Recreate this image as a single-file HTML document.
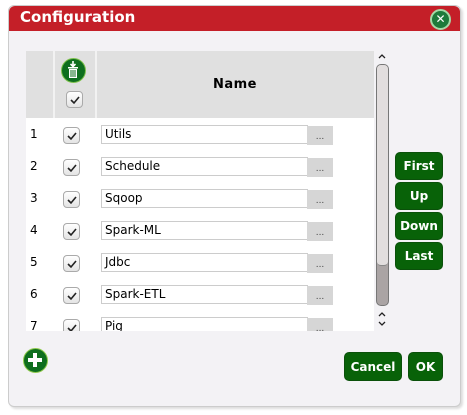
<!DOCTYPE html>
<html><head><style>
*{box-sizing:border-box;margin:0;padding:0}
body{width:467px;height:415px;background:#fff;position:relative;overflow:hidden;font-family:"DejaVu Sans","Liberation Sans",sans-serif}
.dlg{position:absolute;left:8px;top:5px;width:453px;height:402px;background:#f3f2f5;border:1px solid #ccc;border-radius:6px;box-shadow:2px 2px 2px #ddd}
.title{position:absolute;left:0;top:0;width:451px;height:25px;background:#c41f28;border-radius:6px 6px 0 0;color:#fff;font-weight:bold;font-size:15px;padding:2px 0 0 11px}
.x{position:absolute;left:421px;top:3px;width:21px;height:21px;border-radius:50%;background:#1e7a3a;border:2px solid #a6d9a6;color:#fff;font-size:12px;font-weight:bold;text-align:center;line-height:17px}
.tbl{position:absolute;left:26px;top:51px;width:348px;height:280px;background:#fff;overflow:hidden}
.hdr{position:absolute;left:0;top:0;width:348px;height:67px;background:#e0e0e0}
.sep{position:absolute;top:0;width:2px;height:67px;background:#f2f2f2}
.name{position:absolute;left:70px;top:26px;width:278px;text-align:center;font-weight:bold;font-size:13px;letter-spacing:.5px}
.cb{position:absolute;width:17px;height:17px;border:1px solid #aaa;border-radius:4px;background:linear-gradient(#fff,#e4e4e4)}
.cb svg{position:absolute;left:2px;top:2px}
.row{position:absolute;left:0;width:348px;height:32px}
.num{position:absolute;left:4px;top:9px;font-size:12px}
.inp{position:absolute;left:75px;top:7px;width:207px;height:19px;border:1px solid #ccc;background:#fff;font-size:12px;padding:1px 0 0 3px}
.dots{position:absolute;left:281px;top:8px;width:26px;height:19px;background:#d6d6d6;font-size:9px;text-align:center;line-height:22px;color:#444}
.btn{position:absolute;background:#086208;border-radius:5px;color:#fff;font-weight:bold;font-size:12px;text-align:center;border:1px solid #0a500a}
</style></head><body>
<div class="dlg">
<div class="title">Configuration</div>
<div class="x">✕</div>
</div>
<div class="tbl">
<div class="hdr"></div>
<div class="sep" style="left:27px"></div><div class="sep" style="left:69px"></div>
<div style="position:absolute;left:35px;top:7px;width:25px;height:25px;border-radius:50%;background:#0e6e1e;border:1.5px solid #7cc04a">
<svg width="22" height="22" viewBox="0 0 22 22" style="position:absolute;left:0;top:0"><path d="M11 2v5M8.5 5l2.5 2.5 2.5-2.5" stroke="#fff" stroke-width="1.6" fill="none"/><rect x="6" y="8" width="10" height="1.5" fill="#fff"/><rect x="7" y="10" width="8" height="9" fill="#fff"/><path d="M9 11v7M11 11v7M13 11v7" stroke="#0e6e1e" stroke-width="1"/></svg></div>
<div class="cb" style="left:40px;top:40px"><svg width="12" height="12"><path d="M2 6l3 3 5-6" stroke="#222" stroke-width="1.6" fill="none"/></svg></div>
<div class="name">Name</div>
<div class="row" style="top:67px"><span class="num">1</span><div class="cb" style="left:37px;top:9px"><svg width="12" height="12"><path d="M2 6l3 3 5-6" stroke="#222" stroke-width="1.6" fill="none"/></svg></div><div class="inp">Utils</div><div class="dots">...</div></div>
<div class="row" style="top:99px"><span class="num">2</span><div class="cb" style="left:37px;top:9px"><svg width="12" height="12"><path d="M2 6l3 3 5-6" stroke="#222" stroke-width="1.6" fill="none"/></svg></div><div class="inp">Schedule</div><div class="dots">...</div></div>
<div class="row" style="top:131px"><span class="num">3</span><div class="cb" style="left:37px;top:9px"><svg width="12" height="12"><path d="M2 6l3 3 5-6" stroke="#222" stroke-width="1.6" fill="none"/></svg></div><div class="inp">Sqoop</div><div class="dots">...</div></div>
<div class="row" style="top:163px"><span class="num">4</span><div class="cb" style="left:37px;top:9px"><svg width="12" height="12"><path d="M2 6l3 3 5-6" stroke="#222" stroke-width="1.6" fill="none"/></svg></div><div class="inp">Spark-ML</div><div class="dots">...</div></div>
<div class="row" style="top:195px"><span class="num">5</span><div class="cb" style="left:37px;top:9px"><svg width="12" height="12"><path d="M2 6l3 3 5-6" stroke="#222" stroke-width="1.6" fill="none"/></svg></div><div class="inp">Jdbc</div><div class="dots">...</div></div>
<div class="row" style="top:227px"><span class="num">6</span><div class="cb" style="left:37px;top:9px"><svg width="12" height="12"><path d="M2 6l3 3 5-6" stroke="#222" stroke-width="1.6" fill="none"/></svg></div><div class="inp">Spark-ETL</div><div class="dots">...</div></div>
<div class="row" style="top:259px"><span class="num">7</span><div class="cb" style="left:37px;top:9px"><svg width="12" height="12"><path d="M2 6l3 3 5-6" stroke="#222" stroke-width="1.6" fill="none"/></svg></div><div class="inp">Pig</div><div class="dots">...</div></div>
</div>
<svg style="position:absolute;left:376px;top:52px" width="12" height="10"><path d="M3 6l3-3 3 3" stroke="#222" stroke-width="1.3" fill="none"/></svg>
<div style="position:absolute;left:376px;top:64px;width:13px;height:242px;border:1.5px solid #777;border-radius:5px;background:#aaa4a4"></div>
<div style="position:absolute;left:377px;top:65px;width:11px;height:201px;border-radius:4px;background:#e2dede;border-bottom:1px solid #888"></div>
<svg style="position:absolute;left:376px;top:310px" width="12" height="20"><path d="M3 6l3-3 3 3M3 12l3 3 3-3" stroke="#222" stroke-width="1.3" fill="none"/></svg>
<div class="btn" style="left:395px;top:152px;width:48px;height:28px;line-height:27px">First</div>
<div class="btn" style="left:395px;top:182px;width:48px;height:28px;line-height:27px">Up</div>
<div class="btn" style="left:395px;top:212px;width:48px;height:28px;line-height:27px">Down</div>
<div class="btn" style="left:395px;top:242px;width:48px;height:28px;line-height:27px">Last</div>
<div class="btn" style="left:344px;top:352px;width:58px;height:29px;line-height:28px">Cancel</div>
<div class="btn" style="left:408px;top:352px;width:35px;height:29px;line-height:28px">OK</div>
<div style="position:absolute;left:23px;top:348px;width:25px;height:25px;border-radius:50%;background:#0e6e1e;border:1.5px solid #8cc84a">
<svg width="22" height="22" style="position:absolute;left:0;top:0"><path d="M9 4h4v5h5v4h-5v5h-4v-5h-5v-4h5z" fill="#fff"/></svg></div>
</body></html>
